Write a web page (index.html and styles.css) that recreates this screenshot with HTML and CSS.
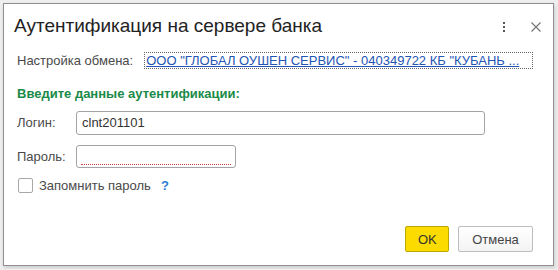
FILE: index.html
```html
<!DOCTYPE html>
<html>
<head>
  <title>Аутентификация на сервере банка</title>
  <link rel="stylesheet" href="styles.css">
</head>
<body>
  <div class="window">
    <!-- Title bar -->
    <div class="header">
      <h1 class="title">Аутентификация на сервере банка</h1>
      <div class="header-tools">
        <svg class="tool" width="12" height="14" viewBox="0 0 12 14">
          <rect x="5" y="2" width="2" height="2" fill="#555"/>
          <rect x="5" y="6" width="2" height="2" fill="#555"/>
          <rect x="5" y="10" width="2" height="2" fill="#555"/>
        </svg>
        <svg class="tool" width="14" height="14" viewBox="0 0 14 14">
          <path d="M2.5 2.5 L11.5 11.5 M11.5 2.5 L2.5 11.5" stroke="#777" stroke-width="1.2" fill="none"/>
        </svg>
      </div>
    </div>

    <div class="content">
      <div class="row setting-row">
        <span class="label">Настройка обмена:</span>
        <a class="setting-link" href="#">ООО "ГЛОБАЛ ОУШЕН СЕРВИС" - 040349722 КБ "КУБАНЬ ...</a>
      </div>

      <div class="section-title">Введите данные аутентификации:</div>

      <div class="row field-row">
        <span class="label field-label">Логин:</span>
        <div class="input login-input">clnt201101</div>
      </div>

      <div class="row field-row">
        <span class="label field-label">Пароль:</span>
        <div class="input password-input"><span class="required-mark"></span></div>
      </div>

      <div class="row check-row">
        <span class="checkbox"></span>
        <span class="label">Запомнить пароль</span>
        <span class="help">?</span>
      </div>
    </div>

    <div class="footer">
      <button class="btn btn-ok">OK</button>
      <button class="btn btn-cancel">Отмена</button>
    </div>
  </div>
</body>
</html>
```

FILE: styles.css
```css
body {
  font-family: "Liberation Sans", Arial, sans-serif;
  background-color: #efefef;
  margin: 0;
  padding: 3px;
}

.window {
  box-sizing: border-box;
  width: 551px;
  height: 263px;
  background-color: #fff;
  border: 1px solid #8f8f8f;
  box-shadow: 1px 2px 4px rgba(0, 0, 0, 0.15);
  display: flex;
  flex-direction: column;
}

.header {
  display: flex;
  align-items: center;
  justify-content: space-between;
  padding: 8px 10px 0 10px;
  height: 28px;
}

.title {
  margin: 0;
  font-size: 19px;
  font-weight: normal;
  color: #222;
}

.header-tools {
  display: flex;
  align-items: center;
  gap: 19px;
  padding-top: 2px;
}

.tool {
  display: block;
}

.content {
  flex: 1;
  padding: 12px 13px 0 13px;
}

.row {
  display: flex;
  align-items: center;
}

.label {
  font-size: 13px;
  color: #4a4a4a;
}

.setting-row {
  height: 17px;
}

.setting-link {
  margin-left: 11px;
  flex: 0 0 auto;
  width: 385px;
  padding: 0 1px 0 1px;
  border: 1px dotted #666;
  font-size: 13px;
  line-height: 15px;
  color: #2455b4;
  white-space: nowrap;
  overflow: hidden;
}

.section-title {
  margin-top: 17px;
  font-size: 13px;
  font-weight: bold;
  color: #1a8a48;
}

.field-row {
  margin-top: 8px;
}

.field-row + .field-row {
  margin-top: 10px;
}

.field-label {
  width: 59px;
}

.input {
  box-sizing: border-box;
  height: 24px;
  border: 1px solid #a3a3a3;
  border-radius: 3px;
  font-size: 13px;
  line-height: 22px;
  color: #333;
  padding: 0 5px;
  position: relative;
}

.login-input {
  width: 409px;
  margin-top: 2px;
}

.password-input {
  width: 160px;
  height: 23px;
}

.required-mark {
  position: absolute;
  left: 4px;
  right: 4px;
  bottom: 2px;
  border-bottom: 1px dotted #d23b3b;
}

.check-row {
  margin-top: 10px;
}

.checkbox {
  box-sizing: border-box;
  width: 15px;
  height: 15px;
  border: 1px solid #a8a8a8;
  border-radius: 2px;
  margin: 0 6px 0 1px;
}

.help {
  margin-left: 10px;
  font-size: 13px;
  font-weight: bold;
  color: #2d7fd2;
}

.footer {
  display: flex;
  justify-content: flex-end;
  gap: 9px;
  padding: 0 20px 13px 0;
}

.btn {
  box-sizing: border-box;
  height: 26px;
  font-family: "Liberation Sans", Arial, sans-serif;
  font-size: 13px;
  border-radius: 2px;
  padding: 0 12px;
  cursor: pointer;
}

.btn-ok {
  width: 44px;
  background-color: #fbdb00;
  border: 1px solid #bfa700;
  color: #333;
}

.btn-cancel {
  width: 75px;
  background: linear-gradient(#ffffff, #f3f3f3);
  border: 1px solid #bdbdbd;
  color: #444;
}
```
